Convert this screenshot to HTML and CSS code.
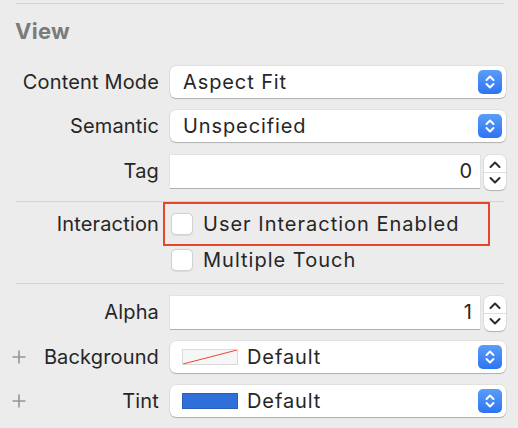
FILE: index.html
```html
<!DOCTYPE html>
<html>
<head>
<meta charset="utf-8">
<link rel="stylesheet" href="styles.css">
</head>
<body>
<div class="panel">
  <div class="sep sep-top"></div>
  <div class="heading">View</div>

  <div class="row r-content">
    <div class="label">Content Mode</div>
    <div class="popup"><span class="ptext">Aspect Fit</span>
      <span class="pbtn"><svg width="24" height="24" viewBox="0 0 24 24"><path d="M8.5 10 L12 6.5 L15.5 10 M8.5 14 L12 17.5 L15.5 14" fill="none" stroke="#fff" stroke-width="2" stroke-linecap="round" stroke-linejoin="round"/></svg></span>
    </div>
  </div>

  <div class="row r-semantic">
    <div class="label">Semantic</div>
    <div class="popup"><span class="ptext">Unspecified</span>
      <span class="pbtn"><svg width="24" height="24" viewBox="0 0 24 24"><path d="M8.5 10 L12 6.5 L15.5 10 M8.5 14 L12 17.5 L15.5 14" fill="none" stroke="#fff" stroke-width="2" stroke-linecap="round" stroke-linejoin="round"/></svg></span>
    </div>
  </div>

  <div class="row r-tag">
    <div class="label">Tag</div>
    <div class="field">0</div>
    <div class="stepper"><svg width="22" height="35" viewBox="0 0 22 35"><path d="M6.5 12 L11 7.5 L15.5 12" fill="none" stroke="#2b2b2b" stroke-width="2" stroke-linecap="round" stroke-linejoin="round"/><line x1="0" y1="17.5" x2="22" y2="17.5" stroke="#dedede" stroke-width="1"/><path d="M6.5 23 L11 27.5 L15.5 23" fill="none" stroke="#2b2b2b" stroke-width="2" stroke-linecap="round" stroke-linejoin="round"/></svg></div>
  </div>

  <div class="sep sep-mid1"></div>

  <div class="row r-cb1">
    <div class="label">Interaction</div>
    <div class="check"><span class="box"></span><span class="ctext">User Interaction Enabled</span></div>
  </div>
  <div class="row r-cb2">
    <div class="label"></div>
    <div class="check"><span class="box"></span><span class="ctext">Multiple Touch</span></div>
  </div>

  <div class="sep sep-mid2"></div>

  <div class="row r-alpha">
    <div class="label">Alpha</div>
    <div class="field">1</div>
    <div class="stepper"><svg width="22" height="35" viewBox="0 0 22 35"><path d="M6.5 12 L11 7.5 L15.5 12" fill="none" stroke="#2b2b2b" stroke-width="2" stroke-linecap="round" stroke-linejoin="round"/><line x1="0" y1="17.5" x2="22" y2="17.5" stroke="#dedede" stroke-width="1"/><path d="M6.5 23 L11 27.5 L15.5 23" fill="none" stroke="#2b2b2b" stroke-width="2" stroke-linecap="round" stroke-linejoin="round"/></svg></div>
  </div>

  <div class="row r-bg">
    <div class="label"><span class="plus"><svg width="14" height="14" viewBox="0 0 14 14"><path d="M7 0.5 V13.5 M0.5 7 H13.5" stroke="#959595" stroke-width="1.6"/></svg></span>Background</div>
    <div class="popup">
      <span class="swatch sw-clear"><svg width="56" height="16" viewBox="0 0 56 16" preserveAspectRatio="none"><line x1="1" y1="15" x2="55" y2="1" stroke="#ee4433" stroke-width="1"/></svg></span>
      <span class="ptext ptext-sw">Default</span>
      <span class="pbtn"><svg width="24" height="24" viewBox="0 0 24 24"><path d="M8.5 10 L12 6.5 L15.5 10 M8.5 14 L12 17.5 L15.5 14" fill="none" stroke="#fff" stroke-width="2" stroke-linecap="round" stroke-linejoin="round"/></svg></span>
    </div>
  </div>

  <div class="row r-tint">
    <div class="label"><span class="plus"><svg width="14" height="14" viewBox="0 0 14 14"><path d="M7 0.5 V13.5 M0.5 7 H13.5" stroke="#959595" stroke-width="1.6"/></svg></span>Tint</div>
    <div class="popup">
      <span class="swatch sw-blue"></span>
      <span class="ptext ptext-sw">Default</span>
      <span class="pbtn"><svg width="24" height="24" viewBox="0 0 24 24"><path d="M8.5 10 L12 6.5 L15.5 10 M8.5 14 L12 17.5 L15.5 14" fill="none" stroke="#fff" stroke-width="2" stroke-linecap="round" stroke-linejoin="round"/></svg></span>
    </div>
  </div>

  <div class="highlight"></div>
</div>
</body>
</html>
```

FILE: styles.css
```css
html, body {
  margin: 0;
  padding: 0;
  background: #ececec;
}
body {
  font-family: "Inter", "Noto Sans", "Liberation Sans", sans-serif;
  color: #262626;
  width: 518px;
  height: 428px;
  overflow: hidden;
}
.panel {
  position: relative;
  padding: 0 12px 0 0;
}
.sep {
  height: 1px;
  background: #d3d3d3;
  margin-left: 16px;
  margin-right: 2px;
}
.sep-top { margin-top: 3px; }
.heading {
  margin-left: 15px;
  margin-top: 12px;
  height: 30px;
  line-height: 30px;
  font-size: 22px;
  font-weight: 700;
  color: #7b7b7b;
  letter-spacing: 0.3px;
}
.row {
  display: flex;
  align-items: center;
  gap: 11px;
}
.label {
  width: 159px;
  flex: none;
  text-align: right;
  font-size: 20px;
  letter-spacing: 0.15px;
  position: relative;
}
.plus {
  position: absolute;
  left: 12px;
  top: 50%;
  margin-top: -7px;
  width: 14px;
  height: 14px;
  display: block;
}
.plus svg { display: block; }
.r-content { margin-top: 20px; height: 32px; }
.r-semantic { margin-top: 12px; height: 32px; }
.r-tag { margin-top: 13px; height: 35px; align-items: flex-start; gap: 0; }
.r-tag .label, .r-alpha .label { margin-right: 11px; line-height: 33px; }
.sep-mid1 { margin-top: 11px; }
.r-cb1 { margin-top: 4px; height: 36px; }
.r-cb2 { height: 36px; }
.sep-mid2 { margin-top: 5px; }
.r-alpha { margin-top: 12px; height: 35px; align-items: flex-start; gap: 0; }
.r-bg { margin-top: 10px; height: 32px; }
.r-tint { margin-top: 12px; height: 32px; }

.popup {
  flex: 1;
  height: 32px;
  background: #fff;
  border-radius: 6px;
  box-shadow: 0 1px 1px rgba(0,0,0,0.22), 0 0 0 0.5px rgba(0,0,0,0.10);
  display: flex;
  align-items: center;
  position: relative;
}
.ptext {
  font-size: 20px;
  letter-spacing: 0.9px;
  padding-left: 13px;
  flex: 1;
}
.ptext-sw { padding-left: 9px; }
.pbtn {
  width: 24px;
  height: 24px;
  border-radius: 5px;
  background: linear-gradient(#5a9df9, #2d74f3);
  margin-right: 4px;
  flex: none;
}
.pbtn svg { display: block; }
.field {
  flex: 1;
  height: 33px;
  background: #fff;
  box-shadow: 0 1px 0 rgba(0,0,0,0.22), 0 0 0 0.5px rgba(0,0,0,0.08);
  font-size: 20px;
  line-height: 33px;
  text-align: right;
  padding-right: 8px;
}
.stepper {
  width: 22px;
  height: 35px;
  margin-left: 4px;
  background: #fff;
  border-radius: 6px;
  box-shadow: 0 1px 1px rgba(0,0,0,0.22), 0 0 0 0.5px rgba(0,0,0,0.10);
  flex: none;
}
.stepper svg { display: block; }
.check {
  display: flex;
  align-items: center;
  gap: 10px;
}
.box {
  width: 22px;
  height: 22px;
  box-sizing: border-box;
  background: #fff;
  border: 1px solid #d2d2d2;
  border-radius: 5px;
  box-shadow: 0 0.5px 1px rgba(0,0,0,0.08);
  margin-left: 1px;
}
.ctext {
  font-size: 20px;
  letter-spacing: 1px;
}
.swatch {
  width: 56px;
  height: 16px;
  box-sizing: border-box;
  margin-left: 12px;
  flex: none;
  display: block;
}
.swatch svg { display: block; position: absolute; }
.sw-clear {
  background: #f6f6f6;
  border: 1.5px solid #dadada;
  position: relative;
  overflow: hidden;
}
.sw-clear svg { left: -1.5px; top: -1.5px; }
.sw-blue {
  background: #2f6fd9;
  border: 1px solid #285fba;
}
.highlight {
  position: absolute;
  left: 163px;
  top: 199px;
  width: 327px;
  height: 44px;
  box-sizing: border-box;
  border: 2px solid #e8462c;
}
```
